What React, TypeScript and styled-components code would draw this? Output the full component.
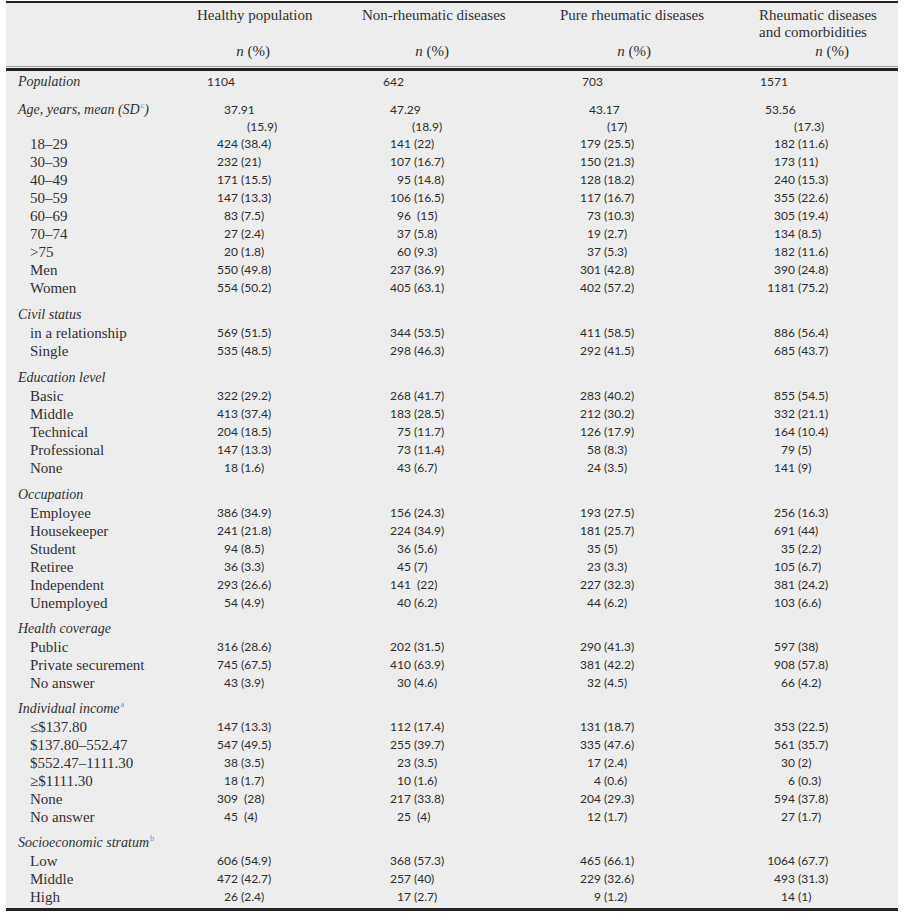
import styled, { createGlobalStyle } from 'styled-components';

const GlobalStyle = createGlobalStyle`
  html, body {
    margin: 0;
    padding: 0;
    background: #fff;
  }
  body {
    font-family: 'Liberation Serif', 'Times New Roman', serif;
    color: #303030;
  }
`;

// label | n1 | pct1 | n2 | pct2 | n3 | pct3 | n4 | pct4
const COLS = '191px 41px 124px 49px 149px 41px 158px 36px 1fr';

const Page = styled.main`
  padding: 1px 6px 0 6px;
`;

const Panel = styled.section`
  width: 892px;
  background: #ededed;
  border-top: 2px solid #222;
  border-bottom: 3px solid #222;
`;

const Head = styled.header`
  display: grid;
  grid-template-columns: ${COLS};
  box-sizing: border-box;
  height: 64px;
  padding-top: 4px;
  border-bottom: 1px solid #9c9c9c;
  font-size: 15px;
  line-height: 17px;
`;

const HeadCell = styled.div`
  grid-column: span 2;
  display: flex;
  flex-direction: column;
  padding-bottom: 6px;
`;

const NLine = styled.div<{ $w: number }>`
  margin-top: auto;
  width: ${(p) => p.$w}px;
  text-align: right;

  em {
    font-style: italic;
  }
`;

const ThickRule = styled.div`
  margin-top: 1px;
  height: 3px;
  background: #222;
`;

const Body = styled.div`
  padding: 2px 0 2px;
`;

const Row = styled.div<{ $gap?: number }>`
  display: grid;
  grid-template-columns: ${COLS};
  height: 18px;
  line-height: 18px;
  margin-top: ${(p) => p.$gap ?? 0}px;
`;

const TallRow = styled(Row)`
  height: 34px;
  line-height: 17px;
`;

const Label = styled.div<{ $group?: boolean }>`
  padding-left: ${(p) => (p.$group ? 12 : 24)}px;
  font-size: ${(p) => (p.$group ? 14 : 15)}px;
  font-style: ${(p) => (p.$group ? 'italic' : 'normal')};
  white-space: nowrap;
`;

const Sup = styled.sup`
  font-size: 8px;
  line-height: 0;
  color: #3d9ad8;
  font-style: normal;
  margin-left: 1px;
`;

const Num = styled.div`
  text-align: right;
  font-family: Lato, 'Liberation Sans', sans-serif;
  font-size: 12px;
  color: #2c2c2c;
`;

const Pct = styled.div`
  padding-left: 3px;
  white-space: pre;
  font-family: Lato, 'Liberation Sans', sans-serif;
  font-size: 12px;
  color: #2c2c2c;
`;

const Plain = styled.div<{ $x: number }>`
  grid-column: span 2;
  padding-left: ${(p) => p.$x}px;
  font-family: Lato, 'Liberation Sans', sans-serif;
  font-size: 12px;
  color: #2c2c2c;
`;

const Stacked = styled.div`
  grid-column: span 2;
  display: flex;
  flex-direction: column;
  font-family: Lato, 'Liberation Sans', sans-serif;
  font-size: 12px;
  color: #2c2c2c;
`;

const Shift = styled.span<{ $x: number }>`
  padding-left: ${(p) => p.$x}px;
`;

type Item = [string, string[]];
type Group = { title: string; sup?: string; gap: number; items: Item[] };

const headers = [
  { title: ['Healthy population'], n: 73 },
  { title: ['Non-rheumatic diseases'], n: 87 },
  { title: ['Pure rheumatic diseases'], n: 91 },
  { title: ['Rheumatic diseases', 'and comorbidities'], n: 90 },
];

const population = [
  { v: '1104', x: 10 },
  { v: '642', x: 21 },
  { v: '703', x: 22 },
  { v: '1571', x: 1 },
];

const ageMean = [
  { m: '37.91', mx: 27, sd: '(15.9)', sx: 50 },
  { m: '47.29', mx: 28, sd: '(18.9)', sx: 50 },
  { m: '43.17', mx: 29, sd: '(17)', sx: 47 },
  { m: '53.56', mx: 6, sd: '(17.3)', sx: 35 },
];

const ageItems: Item[] = [
  ['18–29', ['424 (38.4)', '141 (22)', '179 (25.5)', '182 (11.6)']],
  ['30–39', ['232 (21)', '107 (16.7)', '150 (21.3)', '173 (11)']],
  ['40–49', ['171 (15.5)', '95 (14.8)', '128 (18.2)', '240 (15.3)']],
  ['50–59', ['147 (13.3)', '106 (16.5)', '117 (16.7)', '355 (22.6)']],
  ['60–69', ['83 (7.5)', '96  (15)', '73 (10.3)', '305 (19.4)']],
  ['70–74', ['27 (2.4)', '37 (5.8)', '19 (2.7)', '134 (8.5)']],
  ['>75', ['20 (1.8)', '60 (9.3)', '37 (5.3)', '182 (11.6)']],
  ['Men', ['550 (49.8)', '237 (36.9)', '301 (42.8)', '390 (24.8)']],
  ['Women', ['554 (50.2)', '405 (63.1)', '402 (57.2)', '1181 (75.2)']],
];

const groups: Group[] = [
  {
    title: 'Civil status',
    gap: 9,
    items: [
      ['in a relationship', ['569 (51.5)', '344 (53.5)', '411 (58.5)', '886 (56.4)']],
      ['Single', ['535 (48.5)', '298 (46.3)', '292 (41.5)', '685 (43.7)']],
    ],
  },
  {
    title: 'Education level',
    gap: 9,
    items: [
      ['Basic', ['322 (29.2)', '268 (41.7)', '283 (40.2)', '855 (54.5)']],
      ['Middle', ['413 (37.4)', '183 (28.5)', '212 (30.2)', '332 (21.1)']],
      ['Technical', ['204 (18.5)', '75 (11.7)', '126 (17.9)', '164 (10.4)']],
      ['Professional', ['147 (13.3)', '73 (11.4)', '58 (8.3)', '79 (5)']],
      ['None', ['18 (1.6)', '43 (6.7)', '24 (3.5)', '141 (9)']],
    ],
  },
  {
    title: 'Occupation',
    gap: 9,
    items: [
      ['Employee', ['386 (34.9)', '156 (24.3)', '193 (27.5)', '256 (16.3)']],
      ['Housekeeper', ['241 (21.8)', '224 (34.9)', '181 (25.7)', '691 (44)']],
      ['Student', ['94 (8.5)', '36 (5.6)', '35 (5)', '35 (2.2)']],
      ['Retiree', ['36 (3.3)', '45 (7)', '23 (3.3)', '105 (6.7)']],
      ['Independent', ['293 (26.6)', '141  (22)', '227 (32.3)', '381 (24.2)']],
      ['Unemployed', ['54 (4.9)', '40 (6.2)', '44 (6.2)', '103 (6.6)']],
    ],
  },
  {
    title: 'Health coverage',
    gap: 8,
    items: [
      ['Public', ['316 (28.6)', '202 (31.5)', '290 (41.3)', '597 (38)']],
      ['Private securement', ['745 (67.5)', '410 (63.9)', '381 (42.2)', '908 (57.8)']],
      ['No answer', ['43 (3.9)', '30 (4.6)', '32 (4.5)', '66 (4.2)']],
    ],
  },
  {
    title: 'Individual income',
    sup: 'a',
    gap: 8,
    items: [
      ['≤$137.80', ['147 (13.3)', '112 (17.4)', '131 (18.7)', '353 (22.5)']],
      ['$137.80–552.47', ['547 (49.5)', '255 (39.7)', '335 (47.6)', '561 (35.7)']],
      ['$552.47–1111.30', ['38 (3.5)', '23 (3.5)', '17 (2.4)', '30 (2)']],
      ['≥$1111.30', ['18 (1.7)', '10 (1.6)', '4 (0.6)', '6 (0.3)']],
      ['None', ['309  (28)', '217 (33.8)', '204 (29.3)', '594 (37.8)']],
      ['No answer', ['45  (4)', '25  (4)', '12 (1.7)', '27 (1.7)']],
    ],
  },
  {
    title: 'Socioeconomic stratum',
    sup: 'b',
    gap: 8,
    items: [
      ['Low', ['606 (54.9)', '368 (57.3)', '465 (66.1)', '1064 (67.7)']],
      ['Middle', ['472 (42.7)', '257 (40)', '229 (32.6)', '493 (31.3)']],
      ['High', ['26 (2.4)', '17 (2.7)', '9 (1.2)', '14 (1)']],
    ],
  },
];

const split = (v: string) => {
  const i = v.indexOf(' ');
  return [v.slice(0, i), v.slice(i + 1)];
};

const DataRow = ({ label, values }: { label: string; values: string[] }) => (
  <Row>
    <Label>{label}</Label>
    {values.map((v, i) => {
      const [n, p] = split(v);
      return [<Num key={`n${i}`}>{n}</Num>, <Pct key={`p${i}`}>{p}</Pct>];
    })}
  </Row>
);

const App = () => (
  <Page>
    <GlobalStyle />
    <Panel>
      <Head>
        <div />
        {headers.map((h) => (
          <HeadCell key={h.title[0]}>
            {h.title.map((t) => (
              <div key={t}>{t}</div>
            ))}
            <NLine $w={h.n}>
              <em>n</em> (%)
            </NLine>
          </HeadCell>
        ))}
      </Head>
      <ThickRule />
      <Body>
        <Row>
          <Label $group>Population</Label>
          {population.map((p) => (
            <Plain key={p.v} $x={p.x}>
              {p.v}
            </Plain>
          ))}
        </Row>
        <TallRow $gap={10}>
          <Label $group>
            Age, years, mean (SD<Sup>c</Sup>)
          </Label>
          {ageMean.map((a) => (
            <Stacked key={a.m}>
              <Shift $x={a.mx}>{a.m}</Shift>
              <Shift $x={a.sx}>{a.sd}</Shift>
            </Stacked>
          ))}
        </TallRow>
        {ageItems.map(([label, values]) => (
          <DataRow key={label} label={label} values={values} />
        ))}
        {groups.map((g) => (
          <div key={g.title}>
            <Row $gap={g.gap}>
              <Label $group>
                {g.title}
                {g.sup && <Sup>{g.sup}</Sup>}
              </Label>
            </Row>
            {g.items.map(([label, values]) => (
              <DataRow key={label} label={label} values={values} />
            ))}
          </div>
        ))}
      </Body>
    </Panel>
  </Page>
);

export default App;
